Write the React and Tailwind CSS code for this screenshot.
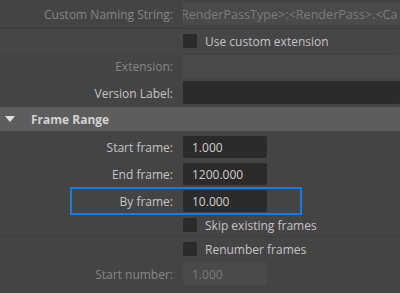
import React from "react";

const font = { fontFamily: '"Open Sans", "Noto Sans", sans-serif' };

function Label({ children, disabled }) {
  return (
    <div
      className={`w-[173px] shrink-0 pt-[2px] text-right text-[12px] leading-none whitespace-nowrap ${
        disabled ? "text-[#868686]" : "text-[#c4c4c4]"
      }`}
    >
      {children}
    </div>
  );
}

function Field({ children, disabled, wide, h = "h-[22px]" }) {
  return (
    <div
      className={`ml-[10px] ${h} ${wide ? "flex-1" : "w-[84px]"} ${
        disabled ? "bg-[#4a4a4a] text-[#7c7c7c]" : "bg-[#2b2b2b] text-[#cfcfcf]"
      } rounded-[2px] flex items-center pt-[2px] px-[9px] text-[12px] leading-none overflow-hidden whitespace-nowrap`}
    >
      {children}
    </div>
  );
}

function Check({ label }) {
  return (
    <div className="ml-[183px] flex items-center gap-[8px]">
      <div className="w-[14px] h-[14px] bg-[#2b2b2b] rounded-[1px]" />
      <span className="pt-[2px] text-[12px] leading-none text-[#c4c4c4] whitespace-nowrap">{label}</span>
    </div>
  );
}

export default function App() {
  return (
    <div className="w-[400px] h-[293px] bg-[#444444] overflow-hidden flex flex-col" style={font}>
      <div className="h-[29px] flex items-center border-b border-[#3d3d3d] shrink-0">
        <Label disabled>Custom Naming String:</Label>
        <div className="ml-[10px] h-[22px] flex-1 min-w-0 bg-[#4a4a4a] text-[#7c7c7c] flex items-center pt-[2px] overflow-hidden whitespace-nowrap text-[12.6px] leading-none">
          <span className="ml-[-2px]">RenderPassType&gt;:&lt;RenderPass&gt;.&lt;Ca</span>
        </div>
      </div>
      <div className="h-[24px] flex items-center shrink-0 bg-[#464646]">
        <Check label="Use custom extension" />
      </div>
      <div className="h-[26px] flex items-center shrink-0">
        <Label disabled>Extension:</Label>
        <Field disabled wide h="h-[23px]" />
      </div>
      <div className="h-[27px] flex items-center shrink-0">
        <Label>Version Label:</Label>
        <Field wide h="h-[23px]" />
      </div>
      <div className="mt-[1px] h-[24px] bg-[#5d5d5d] flex items-center shrink-0">
        <svg width="10" height="6" viewBox="0 0 10 6" className="ml-[5px]">
          <polygon points="0,0 10,0 5,6" fill="#e0e0e0" />
        </svg>
        <span className="ml-[16px] pt-[1px] text-[12px] font-bold text-[#d2d2d2] leading-none">Frame Range</span>
      </div>
      <div className="pt-[2px] flex flex-col shrink-0">
        <div className="h-[27px] flex items-center">
          <Label>Start frame:</Label>
          <Field>1.000</Field>
        </div>
        <div className="h-[27px] flex items-center">
          <Label>End frame:</Label>
          <Field>1200.000</Field>
        </div>
        <div className="h-[27px] flex items-center relative">
          <Label>By frame:</Label>
          <Field>10.000</Field>
          <div className="absolute left-[70px] top-0 w-[232px] h-[28px] border-2 border-[#1f78dc]" />
        </div>
        <div className="h-[23px] flex items-center border-b border-[#3f3f3f]">
          <Check label="Skip existing frames" />
        </div>
        <div className="h-[23px] flex items-center">
          <Check label="Renumber frames" />
        </div>
        <div className="h-[27px] flex items-center">
          <Label disabled>Start number:</Label>
          <Field disabled h="h-[23px]">1.000</Field>
        </div>
      </div>
    </div>
  );
}
